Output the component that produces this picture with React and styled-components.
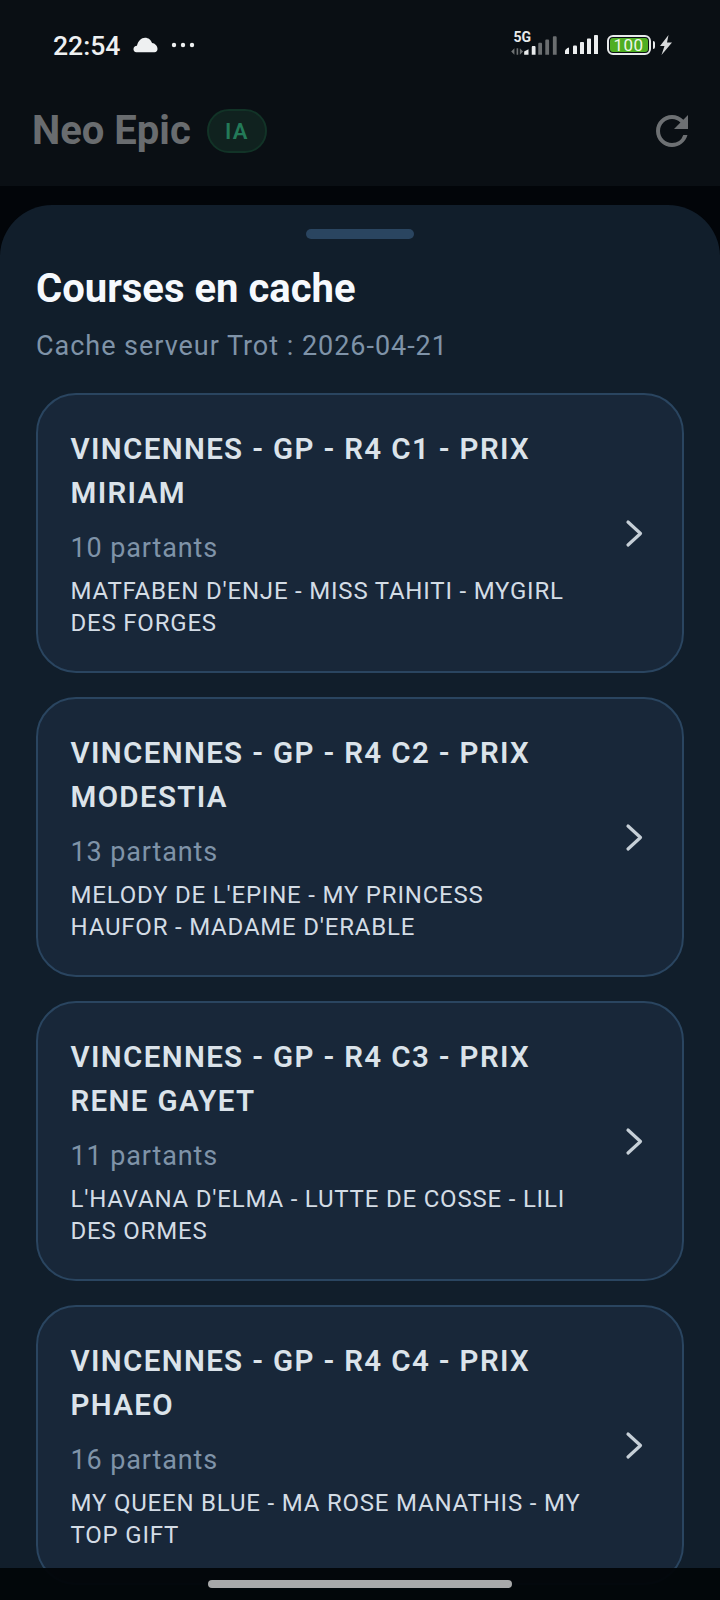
import React from "react";
import styled, { createGlobalStyle } from "styled-components";
import { MdRefresh } from "react-icons/md";

const Global = createGlobalStyle`
  html, body { margin: 0; padding: 0; background: #03060a; }
  * { box-sizing: border-box; }
`;

const Screen = styled.div`
  position: relative;
  width: 720px;
  height: 1600px;
  overflow: hidden;
  background: #020509;
  font-family: Roboto, "Liberation Sans", sans-serif;
  display: flex;
  flex-direction: column;
`;

const Top = styled.div`
  height: 186px;
  flex: none;
  background: #0a0f14;
  display: flex;
  flex-direction: column;
`;

const StatusBar = styled.div`
  height: 90px;
  padding: 0 47px 0 53px;
  display: flex;
  align-items: center;
  justify-content: space-between;
`;

const StatusLeft = styled.div`
  display: flex;
  align-items: center;
  gap: 13px;
`;

const Clock = styled.span`
  color: #eef0f1;
  font-size: 26.600px;
  font-weight: 500;
`;

const StatusRight = styled.div`
  display: flex;
  align-items: center;
`;

const HeaderBar = styled.div`
  flex: 1;
  display: flex;
  align-items: center;
  padding: 0 24px 14px 32px;
`;

const Brand = styled.h1`
  margin: 0;
  color: #696c6f;
  font-size: 40px;
  font-weight: 700;
  line-height: 44px;
`;

const Badge = styled.span`
  margin-left: 16px;
  width: 60px;
  height: 44px;
  border-radius: 22px;
  border: 2px solid #123327;
  background: #10221f;
  color: #237a58;
  font-size: 22px;
  font-weight: 600;
  letter-spacing: 1.200px;
  display: flex;
  align-items: center;
  justify-content: center;
`;

const RefreshButton = styled.div`
  margin-left: auto;
  display: flex;
  color: #6d7073;
`;

const Sheet = styled.div`
  flex: none;
  margin-top: 19px;
  height: 1500px;
  border-radius: 52px 52px 0 0;
  background: #111e2b;
  padding: 24px 36px 0;
`;

const Handle = styled.div`
  width: 108px;
  height: 10px;
  margin: 0 auto;
  border-radius: 5px;
  background: #2a4560;
`;

const Title = styled.h2`
  margin: 26px 0 0;
  color: #f6f9fd;
  font-size: 40px;
  line-height: 48px;
  font-weight: 700;
`;

const Subtitle = styled.p`
  margin: 15px 0 0;
  color: #7f93a8;
  font-size: 27px;
  line-height: 36px;
  letter-spacing: 0.970px;
`;

const List = styled.div`
  margin-top: 29px;
  display: flex;
  flex-direction: column;
  gap: 24px;
`;

const Card = styled.div`
  height: 280px;
  border: 2px solid #2a4560;
  border-radius: 40px;
  background: #182739;
  padding: 32px 0 32px 32.500px;
  display: flex;
  align-items: center;
`;

const CardBody = styled.div`
  flex: 1;
  min-width: 0;
  padding-right: 41px;
`;

const CardTitle = styled.div`
  color: #dbe3ea;
  font-size: 29.500px;
  line-height: 44px;
  font-weight: 600;
  letter-spacing: 1.350px;
`;

const Runners = styled.div`
  margin-top: 15px;
  color: #7f93a8;
  font-size: 27px;
  line-height: 36px;
  letter-spacing: 0.880px;
`;

const Names = styled.div`
  margin-top: 9px;
  color: #d3dce5;
  font-size: 24px;
  line-height: 32px;
  letter-spacing: 0.800px;
`;

const Chevron = styled.svg`
  flex: none;
  width: 19px;
  height: 29px;
  margin-right: 38px;
  margin-top: 1px;
`;

const NavBar = styled.div`
  position: absolute;
  left: 0;
  right: 0;
  bottom: 0;
  height: 32px;
  background: rgba(2, 6, 9, 0.96);
  display: flex;
  justify-content: center;
  padding-top: 12px;
`;

const HomeIndicator = styled.div`
  width: 304px;
  height: 8px;
  border-radius: 4px;
  background: #a8a9aa;
`;

const Cloud = () => (
  <svg width="25" height="16" viewBox="0 0 26 16">
    <path fill="#eef0f1" d="M3.500 15.500C1.500 15.500 .5 14 .5 12.500c0-2 1.500-3.500 3.600-3.600C5 4 8.800.5 12.500.5c3.600 0 6.300 2.300 7.300 5.500 3 .3 5.700 3 5.700 6.200 0 2-1.200 3.300-3.200 3.300z" />
  </svg>
);

const Dots = () => (
  <svg width="24" height="6" viewBox="0 0 24 6">
    <circle cx="3" cy="3" r="2.200" fill="#eef0f1" />
    <circle cx="12" cy="3" r="2.200" fill="#eef0f1" />
    <circle cx="21" cy="3" r="2.200" fill="#eef0f1" />
  </svg>
);

const FiveG = styled.span`
  position: absolute;
  left: 4px;
  top: -2px;
  color: #e8eaeb;
  font-size: 14px;
  line-height: 14px;
  font-weight: 700;
`;

const SignalBox = styled.div`
  position: relative;
  display: flex;
  width: 50px;
  height: 26px;
`;

const Signal5G = () => (
  <SignalBox>
    <FiveG>5G</FiveG>
    <svg width="50" height="26" viewBox="0 0 46 24">
      <path fill="#6f7274" d="M1 18l3-3v6zM6 15h1.500v6H6zM9 15l3 3-3 3z" />
      <path fill="#e8eaeb" d="M13 18l4-2v5h-4zM20 14c0-.5.500-1 1-1h1.500c.5 0 1 .5 1 1v7H20z" />
      <path fill="#6b6e70" d="M26 11c0-.6.500-1 1-1h1.500c.5 0 1 .4 1 1v10H26zM32.500 8c0-.6.500-1 1-1H35c.5 0 1 .4 1 1v13h-3.500zM39.500 5c0-.6.500-1 1-1H42c.5 0 1 .4 1 1v16h-3.500z" />
    </svg>
  </SignalBox>
);

const Signal = () => (
  <svg width="34" height="22" viewBox="0 0 34 22" style={{ marginLeft: 5 }}>
    <path fill="#eceeef" d="M0 17c0-1 2-3 4-3.500V20H0zM8 13c0-1 .5-1.500 1-1.500h2c.5 0 1 .5 1 1.500v7H8zM15 9c0-.6.500-1 1-1h2c.5 0 1 .4 1 1v11h-4zM22 5.500c0-.6.500-1 1-1h2c.5 0 1 .4 1 1V20h-4zM29 2c0-.6.500-1 1-1h2c.5 0 1 .4 1 1v18h-4z" />
  </svg>
);

const BatteryBox = styled.div`
  position: relative;
  margin-left: 8px;
  width: 44px;
  height: 20px;
  border: 2px solid #e8eaeb;
  border-radius: 6px;
  padding: 1px;
  display: flex;
`;

const BatteryFill = styled.div`
  flex: 1;
  border-radius: 3px;
  background: #4fae22;
  color: #eef6ea;
  font-size: 17px;
  line-height: 14px;
  text-align: center;
  letter-spacing: 0.500px;
`;

const BatteryCap = styled.span`
  margin-left: 2px;
  width: 2.500px;
  height: 8px;
  border-radius: 0 2px 2px 0;
  background: #e8eaeb;
`;

const Bolt = () => (
  <svg width="14" height="20" viewBox="0 0 14 20" style={{ marginLeft: 4 }}>
    <path fill="#d8dadb" d="M9.500 0L1 11h4.500L2.500 20 13 7.500H8z" />
  </svg>
);

const races = [
  { t: "VINCENNES - GP - R4 C1 - PRIX MIRIAM", n: "10 partants", h: "MATFABEN D'ENJE - MISS TAHITI - MYGIRL DES FORGES" },
  { t: "VINCENNES - GP - R4 C2 - PRIX MODESTIA", n: "13 partants", h: "MELODY DE L'EPINE - MY PRINCESS HAUFOR - MADAME D'ERABLE" },
  { t: "VINCENNES - GP - R4 C3 - PRIX RENE GAYET", n: "11 partants", h: "L'HAVANA D'ELMA - LUTTE DE COSSE - LILI DES ORMES" },
  { t: "VINCENNES - GP - R4 C4 - PRIX PHAEO", n: "16 partants", h: "MY QUEEN BLUE - MA ROSE MANATHIS - MY TOP GIFT" },
];

export default function App() {
  return (
    <Screen>
      <Global />
      <Top>
        <StatusBar>
          <StatusLeft>
            <Clock>22:54</Clock>
            <Cloud />
            <Dots />
          </StatusLeft>
          <StatusRight>
            <Signal5G />
            <Signal />
            <BatteryBox><BatteryFill>100</BatteryFill></BatteryBox>
            <BatteryCap />
            <Bolt />
          </StatusRight>
        </StatusBar>
        <HeaderBar>
          <Brand>Neo Epic</Brand>
          <Badge>IA</Badge>
          <RefreshButton><MdRefresh size={48} /></RefreshButton>
        </HeaderBar>
      </Top>
      <Sheet>
        <Handle />
        <Title>Courses en cache</Title>
        <Subtitle>Cache serveur Trot : 2026-04-21</Subtitle>
        <List>
          {races.map((r) => (
            <Card key={r.t}>
              <CardBody>
                <CardTitle>{r.t}</CardTitle>
                <Runners>{r.n}</Runners>
                <Names>{r.h}</Names>
              </CardBody>
              <Chevron viewBox="0 0 19 29">
                <path d="M3 3l12.500 11.500L3 26" fill="none" stroke="#c6cfd7" strokeWidth="3.200" strokeLinecap="round" strokeLinejoin="round" />
              </Chevron>
            </Card>
          ))}
        </List>
      </Sheet>
      <NavBar><HomeIndicator /></NavBar>
    </Screen>
  );
}
